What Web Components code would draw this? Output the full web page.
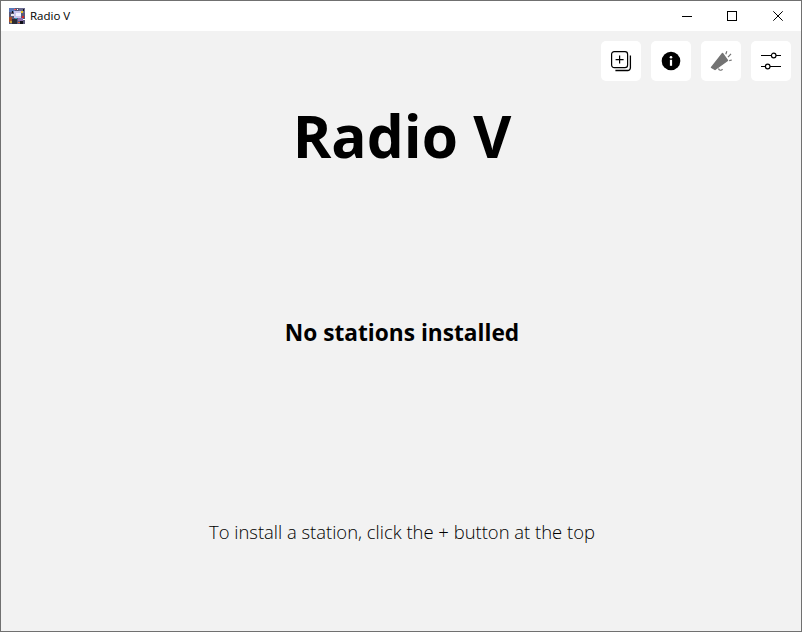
<!DOCTYPE html>
<html><head><meta charset="utf-8"><style>
html,body{margin:0;padding:0;width:802px;height:632px;overflow:hidden;background:#f2f2f2}
</style></head><body>
<app-window>
<title-bar slot="bar" label="Radio V"></title-bar>
<tool-bar slot="tools">
<tool-button><svg width="22" height="22" viewBox="0 0 22 22" fill="none" stroke="#000" stroke-width="1.2"><rect x="1.6" y="1.6" width="16" height="16" rx="2.6"/><path d="M9.6 5.6v8M5.6 9.6h8"/><path d="M20.4 5.4v12.4a2.7 2.7 0 0 1-2.7 2.7H5.4" stroke-width="1.3"/></svg></tool-button>
<tool-button><svg width="20" height="20" viewBox="0 0 20 20"><circle cx="10" cy="10" r="9.3" fill="#000"/><rect x="8.9" y="8.8" width="2.2" height="6" fill="#fff"/><circle cx="10" cy="6.2" r="1.3" fill="#fff"/></svg></tool-button>
<tool-button><svg width="22" height="22" viewBox="0 0 22 22"><path d="M1.5 17.5 12.5 3.5 17.5 10.5 5 19.5Z" fill="#737373" stroke="#737373" stroke-linejoin="round" stroke-width="1.4"/><path d="M8.5 18.5c.5 2 3 2.4 4 .6" fill="none" stroke="#737373" stroke-width="1.2"/><path d="M15.8 4.2 16.8 1.2M18 7.2 21 3.8M19.2 10.6 21.8 10" stroke="#737373" stroke-width="1.2" fill="none"/></svg></tool-button>
<tool-button><svg width="22" height="22" viewBox="0 0 22 22" fill="none" stroke="#000" stroke-width="1.2"><path d="M1 5.5h10.5M16 5.5h5M1 16.5h4.5M10 16.5h11"/><circle cx="13.7" cy="5.5" r="2.3"/><circle cx="7.7" cy="16.5" r="2.3"/></svg></tool-button>
</tool-bar>
<main-panel>
<span slot="title">Radio V</span>
<span slot="status">No stations installed</span>
<span slot="hint">To install a station, click the + button at the top</span>
</main-panel>
</app-window>
<script>
function def(name, html){
  customElements.define(name, class extends HTMLElement{
    constructor(){super();const r=this.attachShadow({mode:'open'});r.innerHTML=html;}
    connectedCallback(){const l=this.shadowRoot.querySelector('[data-label]');if(l)l.textContent=this.getAttribute('label')||'';}
  });
}
def('app-window',`<style>:host{display:flex;flex-direction:column;box-sizing:border-box;width:802px;height:632px;border:1px solid #707070;background:#f2f2f2;position:relative}
.tools{position:absolute;top:40px;right:10px}</style>
<slot name="bar"></slot><div class="tools"><slot name="tools"></slot></div><slot></slot>`);
def('title-bar',`<style>:host{display:flex;align-items:center;height:30px;background:#fff;flex:none;font:11.5px "Open Sans","Noto Sans",sans-serif;color:#000}
.ico{width:16px;height:16px;margin-left:8px;flex:none}
.t{margin-left:5px;flex:1;padding-bottom:2px}
.w{display:flex;height:30px}
.b{width:46px;height:30px;display:flex;align-items:center;justify-content:center}
</style>
<svg class="ico" viewBox="0 0 16 16" shape-rendering="crispEdges"><rect width="16" height="16" fill="#5a5878"/><rect x="0" y="0" width="6" height="4" fill="#5a78b8"/><rect x="10" y="0" width="6" height="5" fill="#6a6a90"/><rect x="5" y="3" width="7" height="7" fill="#c9c5ea"/><rect x="7" y="5" width="5" height="3" fill="#f2f0ff"/><rect x="2" y="6" width="3" height="2" fill="#e8e8e8"/><rect x="0" y="9" width="3" height="5" fill="#a5502a"/><rect x="3" y="11" width="5" height="5" fill="#2c2c34"/><rect x="9" y="10" width="5" height="3" fill="#8a70b0"/><rect x="12" y="3" width="2" height="2" fill="#e8c020"/><rect x="13" y="8" width="2" height="2" fill="#d82828"/><rect x="11" y="13" width="3" height="3" fill="#101018"/><rect x="5" y="1" width="2" height="1" fill="#ff5050"/><rect x="1" y="13" width="2" height="2" fill="#d0a030"/><rect x="8" y="1" width="1" height="1" fill="#fff"/><rect x="14" y="1" width="1" height="2" fill="#111"/><rect x="3" y="3" width="1" height="2" fill="#111"/><rect x="9" y="14" width="2" height="1" fill="#e06030"/><rect x="14" y="11" width="2" height="1" fill="#fff"/><rect x="6" y="10" width="2" height="1" fill="#20a0c0"/></svg>
<span class="t" data-label></span>
<div class="w"><div class="b"><svg width="12" height="10" shape-rendering="crispEdges"><path d="M2 5.5h10" stroke="#000"/></svg></div>
<div class="b"><svg width="10" height="10" shape-rendering="crispEdges"><rect x=".5" y=".5" width="9" height="9" fill="none" stroke="#000"/></svg></div>
<div class="b"><svg width="10" height="10"><path d="M.3.3l9.4 9.4M9.7.3.3 9.7" stroke="#000" stroke-width="1"/></svg></div></div>`);
def('tool-bar',`<style>:host{display:flex;gap:10px}</style><slot></slot>`);
def('tool-button',`<style>:host{display:flex;width:40px;height:40px;background:#fff;border-radius:5px;align-items:center;justify-content:center}</style><slot></slot>`);
def('main-panel',`<style>:host{display:flex;flex-direction:column;align-items:center;flex:1;color:#000;font-family:"Open Sans","Noto Sans",sans-serif;text-align:center;padding-left:2px}
.a{font-size:58.6px;font-weight:700;line-height:84px;margin-top:62px}
.b{font-size:22.7px;font-weight:700;line-height:30px;margin-top:141px}
.c{font-size:18.45px;font-weight:300;line-height:26px;margin-top:171px}
</style><div class="a"><slot name="title"></slot></div><div class="b"><slot name="status"></slot></div><div class="c"><slot name="hint"></slot></div>`);
</script>
</body></html>
